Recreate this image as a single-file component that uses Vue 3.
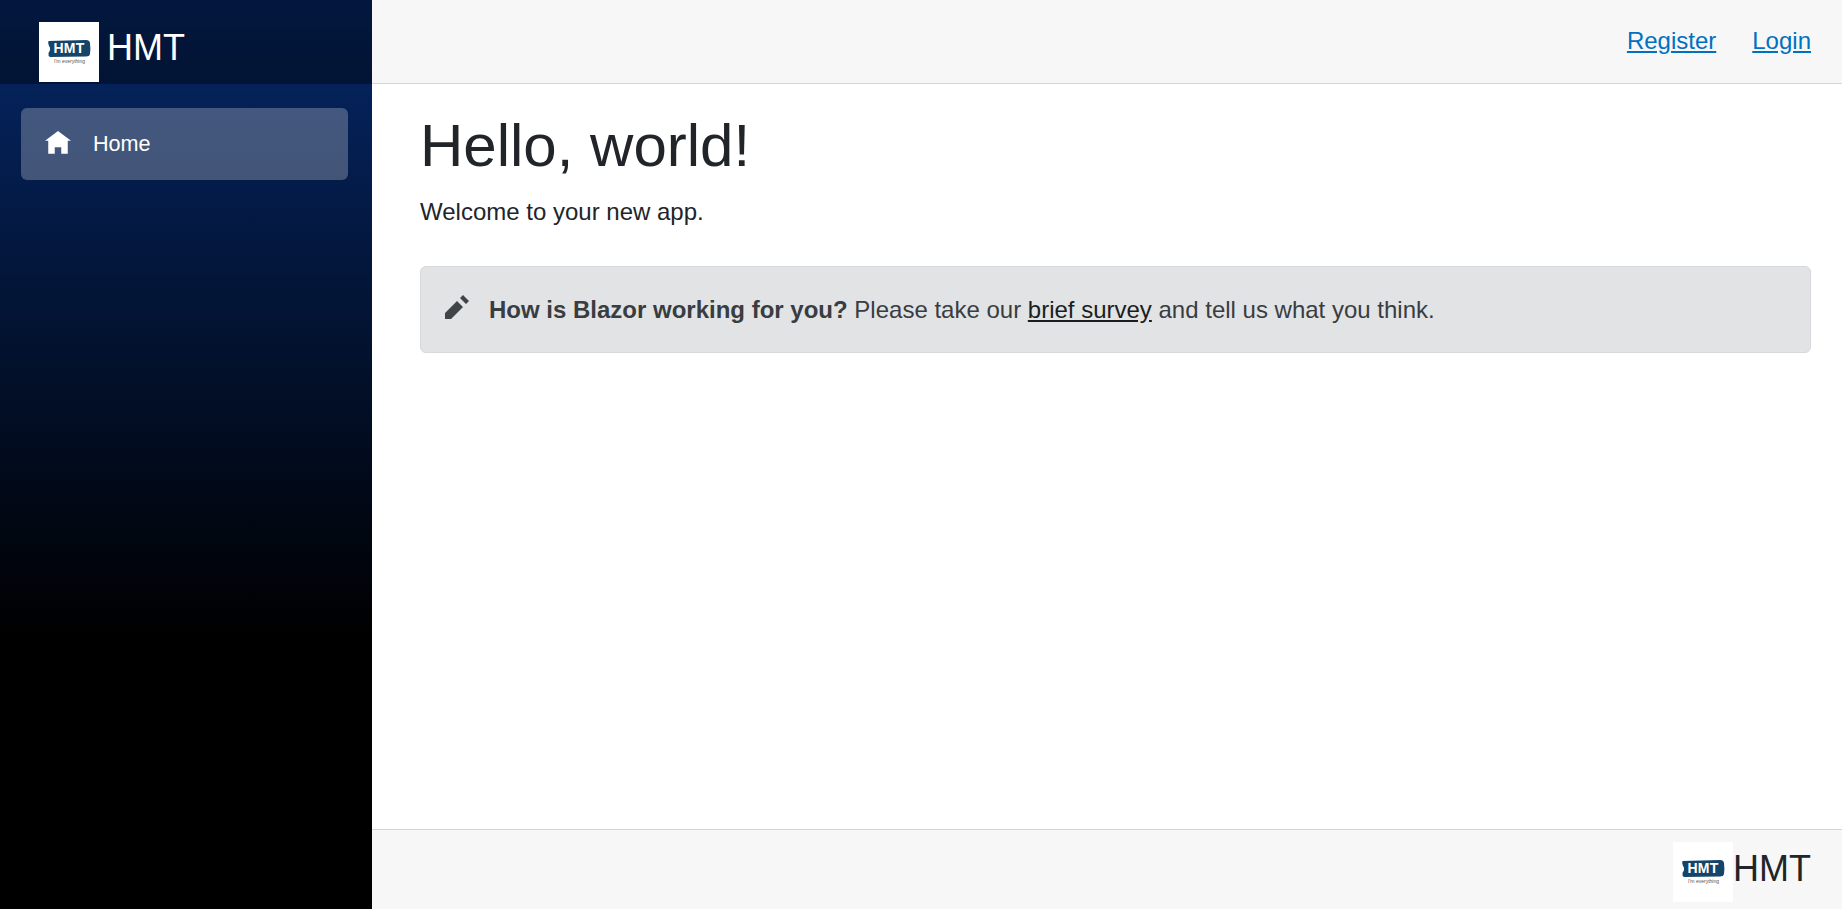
<script setup>
</script>

<template>
  <div class="page">
    <aside class="sidebar">
      <div class="brand">
        <svg class="logo" viewBox="0 0 60 60" aria-hidden="true">
          <rect width="60" height="60" fill="#fff" />
          <path d="M9.500 19 L47 18 Q50.500 18 51 21 Q51.800 27 51 32 Q50.500 34.500 47 34.500 L11 35 Q9 34 9.500 31 Q12.500 27 10 24 Q8.500 21 9.500 19 Z" fill="#164469" />
          <text x="30" y="31" text-anchor="middle" class="logo-mark">HMT</text>
          <text x="30.500" y="41" text-anchor="middle" class="logo-tag">I'm everything</text>
        </svg>
        <span class="brand-name">HMT</span>
      </div>
      <nav class="nav">
        <a class="nav-item">
          <svg class="nav-icon" viewBox="0 0 8 8" aria-hidden="true">
            <path d="M4 0l-4 3h1v4h2v-2h2v2h2v-4.030l1 .030-4-3z" fill="#fff" />
          </svg>
          <span>Home</span>
        </a>
      </nav>
    </aside>
    <div class="content">
      <header class="topbar">
        <a class="link">Register</a>
        <a class="link">Login</a>
      </header>
      <main class="main">
        <h1 class="title">Hello, world!</h1>
        <p class="lead">Welcome to your new app.</p>
        <div class="alert">
          <svg class="alert-icon" viewBox="0 0 8 8" aria-hidden="true">
            <path d="M6 0l-1 1 2 2 1-1-2-2zm-2 2l-4 4v2h2l4-4-2-2z" fill="#3f4448" />
          </svg>
          <span><strong>How is Blazor working for you?</strong> Please take our <a class="survey">brief survey</a> and tell us what you think.</span>
        </div>
      </main>
      <footer class="footer">
        <svg class="logo" viewBox="0 0 60 60" aria-hidden="true">
          <rect width="60" height="60" fill="#fff" />
          <path d="M9.500 19 L47 18 Q50.500 18 51 21 Q51.800 27 51 32 Q50.500 34.500 47 34.500 L11 35 Q9 34 9.500 31 Q12.500 27 10 24 Q8.500 21 9.500 19 Z" fill="#164469" />
          <text x="30" y="31" text-anchor="middle" class="logo-mark">HMT</text>
          <text x="30.500" y="41" text-anchor="middle" class="logo-tag">I'm everything</text>
        </svg>
        <span class="footer-name">HMT</span>
      </footer>
    </div>
  </div>
</template>

<style>
html, body {
  margin: 0;
  height: 100%;
  overflow: hidden;
}
</style>

<style scoped>
.page {
  display: flex;
  width: 1842px;
  height: 909px;
  font-family: "Liberation Sans", Arial, sans-serif;
  color: #212529;
  background: #fff;
}
.sidebar {
  width: 372px;
  flex: none;
  background: linear-gradient(180deg, #052767 0%, #000 70%);
}
.brand {
  box-sizing: border-box;
  height: 84px;
  display: flex;
  align-items: flex-start;
  padding: 22px 0 0 39px;
  background: rgba(0, 0, 0, 0.4);
}
.logo {
  display: block;
  width: 60px;
  height: 60px;
  flex: none;
}
.logo-mark {
  font: 700 14px "Liberation Sans", sans-serif;
  letter-spacing: 0.3px;
  fill: #fff;
}
.logo-tag {
  font: 400 5px "Liberation Sans", sans-serif;
  fill: #555;
}
.brand-name {
  margin: 3px 0 0 8px;
  font-size: 36px;
  line-height: 46px;
  color: #fff;
}
.nav {
  padding: 24px 24px 0 21px;
}
.nav-item {
  box-sizing: border-box;
  height: 72px;
  display: flex;
  align-items: center;
  padding-left: 24px;
  border-radius: 6px;
  background: rgba(255, 255, 255, 0.25);
  color: #fff;
  font-size: 21.600px;
}
.nav-icon {
  width: 26px;
  height: 26px;
  margin-right: 22px;
}
.content {
  flex: 1;
  min-width: 0;
  display: flex;
  flex-direction: column;
}
.topbar {
  box-sizing: border-box;
  height: 84px;
  flex: none;
  display: flex;
  justify-content: flex-end;
  align-items: center;
  gap: 36px;
  padding: 0 31px 2px 0;
  background: #f7f7f7;
  border-bottom: 1px solid #d6d5d5;
}
.link {
  font-size: 24px;
  color: #0071c1;
  text-decoration: underline;
}
.main {
  flex: 1;
  padding: 26px 31px 0 48px;
}
.title {
  margin: 0;
  font-size: 60px;
  font-weight: 400;
  line-height: 72px;
}
.lead {
  margin: 12px 0 0;
  font-size: 24px;
  line-height: 36px;
}
.alert {
  box-sizing: border-box;
  height: 87px;
  margin-top: 36px;
  display: flex;
  align-items: center;
  padding-left: 24px;
  border: 1px solid #d6d8db;
  border-radius: 6px;
  background: #e2e3e5;
  color: #383d41;
  font-size: 24px;
}
.alert-icon {
  width: 24px;
  height: 24px;
  margin: 0 20px 6px 0;
  flex: none;
}
.survey {
  color: #1b1e21;
  text-decoration: underline;
}
.footer {
  box-sizing: border-box;
  height: 80px;
  flex: none;
  display: flex;
  justify-content: flex-end;
  align-items: center;
  padding-right: 31px;
  background: #f7f7f7;
  border-top: 1px solid #d6d5d5;
}
.footer .logo {
  margin-top: 5px;
}
.footer-name {
  font-size: 36px;
  line-height: 46px;
  margin-top: -2px;
}
</style>
